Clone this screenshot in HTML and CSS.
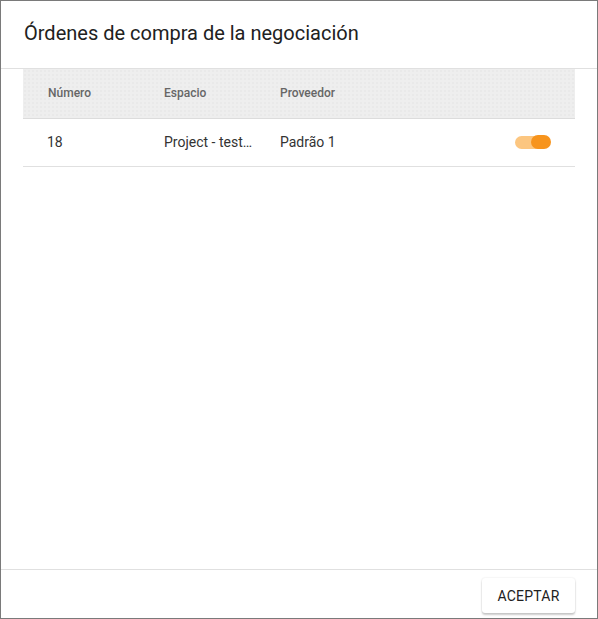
FILE: index.html
```html
<!DOCTYPE html>
<html lang="es">
<head>
<meta charset="utf-8">
<title>Órdenes de compra</title>
<link rel="stylesheet" href="styles.css">
</head>
<body>
<div class="dialog">
  <div class="dialog-header">
    <h1 class="dialog-title">Órdenes de compra de la negociación</h1>
  </div>
  <div class="dialog-body">
    <div class="table">
      <div class="thead">
        <div class="cell">Número</div>
        <div class="cell">Espacio</div>
        <div class="cell">Proveedor</div>
        <div class="cell"></div>
      </div>
      <div class="trow">
        <div class="cell">18</div>
        <div class="cell cell-narrow">Project - testing</div>
        <div class="cell">Padrão 1</div>
        <div class="cell cell-toggle">
          <span class="toggle"><span class="toggle-thumb"></span></span>
        </div>
      </div>
    </div>
  </div>
  <div class="dialog-footer">
    <button class="btn">ACEPTAR</button>
  </div>
</div>
</body>
</html>
```

FILE: styles.css
```css
* { box-sizing: border-box; }
html, body { margin: 0; padding: 0; background: #fff; }
body { font-family: Roboto, "Liberation Sans", sans-serif; }

.dialog {
  width: 598px;
  height: 619px;
  border: 1px solid #7a7a7a;
  display: flex;
  flex-direction: column;
  background: #fff;
}

.dialog-header {
  height: 68px;
  border-bottom: 1px solid #e0e0e0;
  padding: 0 0 0 23px;
  display: flex;
  align-items: center;
}
.dialog-title {
  margin: 0;
  font-size: 20px;
  font-weight: 400;
  color: #212121;
  padding-bottom: 3px;
}

.dialog-body {
  flex: 1;
  padding: 0 22px 0 22px;
}

.thead, .trow {
  display: grid;
  grid-template-columns: 141px 116px 116px 1fr;
  align-items: center;
}
.thead {
  height: 50px;
  background-color: #eeeeee;
  background-image: radial-gradient(circle, #e2e2e2 0.6px, transparent 0.8px);
  background-size: 4px 4px;
  border-bottom: 1px solid #dcdcdc;
  font-size: 12px;
  font-weight: 500;
  color: #666;
}
.thead .cell:first-child { padding-left: 25px; }
.trow {
  height: 48px;
  border-bottom: 1px solid #e0e0e0;
  font-size: 14px;
  color: #333;
}
.trow .cell:first-child { padding-left: 24px; }
.cell {
  white-space: nowrap;
  overflow: hidden;
  text-overflow: ellipsis;
  padding-right: 24px;
}
.cell-narrow { padding-right: 27px; }
.thead .cell { padding-bottom: 1px; }
.trow .cell { padding-bottom: 1px; }
.cell-toggle {
  display: flex;
  justify-content: flex-end;
  padding-right: 24px;
  overflow: visible;
}
.toggle {
  position: relative;
  display: block;
  width: 30px;
  height: 13px;
  border-radius: 7px;
  background: #fcc680;
  margin-right: 6px;
  margin-top: 1px;
}
.toggle-thumb {
  position: absolute;
  right: -6px;
  top: -1px;
  width: 20px;
  height: 14px;
  border-radius: 7px;
  background: #f7941d;
}

.dialog-footer {
  height: 49px;
  border-top: 1px solid #e0e0e0;
  display: flex;
  justify-content: flex-end;
  align-items: flex-start;
  padding: 8px 22px 0 0;
}
.btn {
  width: 93px;
  height: 35px;
  border: none;
  border-radius: 3px;
  background: #fff;
  box-shadow: 0 2px 2px rgba(0,0,0,0.2), 0 0 2px rgba(0,0,0,0.12);
  font-family: Roboto, "Liberation Sans", sans-serif;
  font-size: 14px;
  font-weight: 400;
  color: #212121;
  letter-spacing: 0.2px;
  padding: 0;
}
```
